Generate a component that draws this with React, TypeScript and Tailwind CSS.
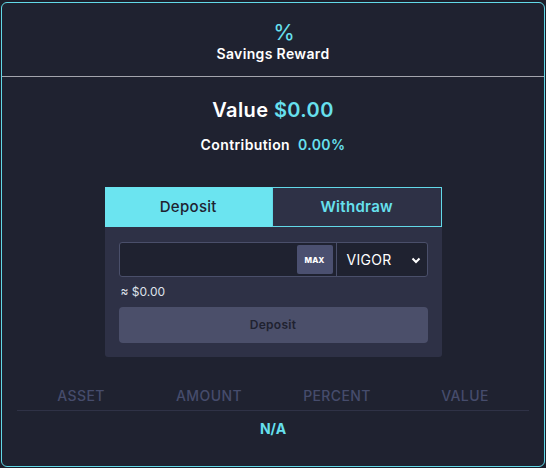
import React from "react";

export default function App() {
  const font = { fontFamily: "Inter, 'Open Sans', sans-serif" };
  return (
    <div className="w-[546px] h-[468px] bg-[#1d1f2b] pt-[2px] px-[1px]" style={font}>
      <div className="h-[465px] border border-[#62d9e8] rounded-[6px] bg-[#1f2230] flex flex-col">
        <div className="h-[74px] border-b border-[#a3a5ad] flex flex-col items-center pt-[16px]">
          <div className="text-[22px] leading-[26px] text-[#67e0ee] ml-[22px]">%</div>
          <div className="text-[14px] leading-[18px] font-semibold text-white tracking-[0.35px]">Savings Reward</div>
        </div>
        <div className="flex flex-col items-center">
          <div className="mt-[20px] text-[20px] leading-[26px] font-semibold text-white tracking-[0.4px]">
            Value <span className="text-[#67e0ee]">$0.00</span>
          </div>
          <div className="mt-[13px] text-[14px] leading-[18px] font-semibold text-white tracking-[0.4px]">
            Contribution <span className="ml-[4px] text-[#67e0ee]">0.00%</span>
          </div>
          <div className="mt-[33px] w-[337px] bg-[#2e3146] rounded-b-[3px]">
            <div className="flex h-[40px]">
              <div className="flex-1 bg-[#6be4f0] flex items-center justify-center text-[15px] font-medium text-[#1f2230] tracking-[0.3px]">
                Deposit
              </div>
              <div className="flex-1 border border-[#62d9e8] flex items-center justify-center text-[15px] font-semibold text-[#67e0ee] tracking-[0.3px]">
                Withdraw
              </div>
            </div>
            <div className="px-[14px] pt-[15px] pb-[14px]">
              <div className="flex h-[35px] border border-[#4a4f6a] rounded-[3px] bg-[#1f2230]">
                <div className="flex-1 flex items-center justify-end pr-[3px]">
                  <div className="w-[36px] h-[29px] bg-[#4b5070] rounded-[2px] flex items-center justify-center text-[8px] font-extrabold text-white">
                    MAX
                  </div>
                </div>
                <div className="w-[91px] border-l border-[#4a4f6a] flex items-center justify-between pl-[10px] pr-[5px] text-[14px] text-white tracking-[0.3px]">
                  <span>VIGOR</span>
                  <svg width="12" height="12" viewBox="0 0 12 12">
                    <path d="M2.5 4.5 L6 8 L9.5 4.5" stroke="white" strokeWidth="2" fill="none" />
                  </svg>
                </div>
              </div>
              <div className="mt-[7px] text-[12px] leading-[16px] text-[#dfe1ea] pl-[2px]">≈ $0.00</div>
              <div className="mt-[7px] h-[36px] rounded-[4px] bg-[#4b4f6a] flex items-center justify-center text-[12px] font-semibold text-[#1f2230] tracking-[0.3px]">
                Deposit
              </div>
            </div>
          </div>
        </div>
        <div className="mx-[15px] mt-[30px]">
          <div className="grid grid-cols-4 h-[24px] border-b border-[#2f3246] items-start">
            {["ASSET", "AMOUNT", "PERCENT", "VALUE"].map((h) => (
              <div key={h} className="text-center text-[14px] leading-[18px] font-medium text-[#464c6c] tracking-[0.4px]">
                {h}
              </div>
            ))}
          </div>
          <div className="text-center mt-[9px] text-[14px] leading-[18px] font-bold text-[#67e0ee]">N/A</div>
        </div>
      </div>
    </div>
  );
}
